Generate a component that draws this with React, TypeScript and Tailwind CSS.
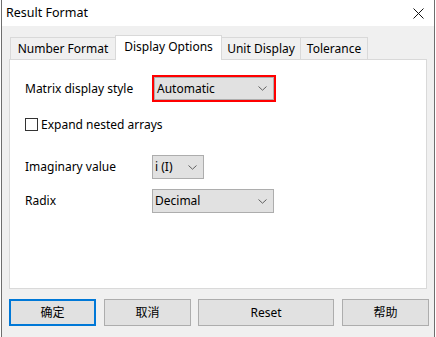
import React from 'react';

interface TabItem {
  name: string;
  width: string;
  selected?: boolean;
}

const tabs: TabItem[] = [
  { name: 'Number Format', width: 'w-[105px] border-l' },
  { name: 'Display Options', width: 'w-[107px]', selected: true },
  { name: 'Unit Display', width: 'w-[79px] border-r' },
  { name: 'Tolerance', width: 'w-[67px] border-r' },
];

const Chevron: React.FC = () => (
  <svg width="9" height="5" viewBox="0 0 9 5" className="shrink-0">
    <polyline points="0.5,0.5 4.5,4.2 8.5,0.5" fill="none" stroke="#606060" strokeWidth="1" />
  </svg>
);

const Dropdown: React.FC<{ value: string; className: string }> = ({ value, className }) => (
  <div
    className={`flex items-center justify-between border border-[#adadad] bg-[#e1e1e1] pl-[2px] pr-[6px] ${className}`}
  >
    <span>{value}</span>
    <Chevron />
  </div>
);

const Button: React.FC<{ label: string; className: string; primary?: boolean }> = ({
  label,
  className,
  primary,
}) => (
  <div
    className={`flex h-[27px] shrink-0 items-center justify-center bg-[#e1e1e1] ${
      primary ? 'border-2 border-[#0078d7]' : 'border border-[#adadad]'
    } ${className}`}
  >
    {label}
  </div>
);

const App: React.FC = () => {
  return (
    <div
      className="h-[337px] w-[436px] bg-white px-px text-[12px] leading-none text-black"
      style={{ fontFamily: '"Noto Sans", "Noto Sans CJK SC", sans-serif' }}
    >
      <div className="flex h-full flex-col border-x border-[#6e6e6e]">
        {/* Title bar */}
        <div className="flex h-[26px] items-center justify-between bg-white pl-[4px] pr-[10px]">
          <span className="text-[12.5px]">Result Format</span>
          <svg width="11" height="11" viewBox="0 0 11 11">
            <line x1="0.5" y1="0.5" x2="10.5" y2="10.5" stroke="#111" strokeWidth="1" />
            <line x1="10.5" y1="0.5" x2="0.5" y2="10.5" stroke="#111" strokeWidth="1" />
          </svg>
        </div>

        {/* Body */}
        <div className="flex flex-1 flex-col bg-[#f0f0f0] px-[7px] pt-[9px]">
          {/* Tabs */}
          <div className="flex h-[24px] items-end pl-px">
            {tabs.map((tab) =>
              tab.selected ? (
                <div
                  key={tab.name}
                  className={`relative z-10 mb-[-1px] flex h-[25px] items-center justify-center border-x border-t border-[#d9d9d9] bg-white pb-[2px] ${tab.width}`}
                >
                  {tab.name}
                </div>
              ) : (
                <div
                  key={tab.name}
                  className={`flex h-[22px] items-center justify-center border-t border-[#d9d9d9] bg-[#f0f0f0] ${tab.width}`}
                >
                  {tab.name}
                </div>
              )
            )}
          </div>

          {/* Panel */}
          <div className="flex h-[230px] flex-col border border-[#d9d9d9] bg-white pl-[15px]">
            <div className="mt-[15px] flex h-[27px] items-center">
              <span className="w-[127px]">Matrix display style</span>
              <div className="border-2 border-[#ff0000]">
                <Dropdown value="Automatic" className="h-[23px] w-[120px]" />
              </div>
            </div>

            <div className="mt-[16px] flex h-[13px] items-center">
              <div className="h-[13px] w-[13px] border border-[#333333] bg-white" />
              <span className="ml-[3px]">Expand nested arrays</span>
            </div>

            <div className="mt-[24px] flex h-[24px] items-center">
              <span className="w-[127px]">Imaginary value</span>
              <Dropdown value="i (I)" className="h-[24px] w-[52px]" />
            </div>

            <div className="mt-[10px] flex h-[24px] items-center">
              <span className="w-[127px]">Radix</span>
              <Dropdown value="Decimal" className="h-[24px] w-[122px]" />
            </div>
          </div>

          {/* Buttons */}
          <div className="mt-[10px] flex">
            <Button label="确定" className="w-[87px]" primary />
            <Button label="取消" className="ml-[8px] w-[87px]" />
            <Button label="Reset" className="ml-[7px] w-[136px]" />
            <Button label="帮助" className="ml-[8px] w-[87px]" />
          </div>
        </div>
      </div>
    </div>
  );
};

export default App;
